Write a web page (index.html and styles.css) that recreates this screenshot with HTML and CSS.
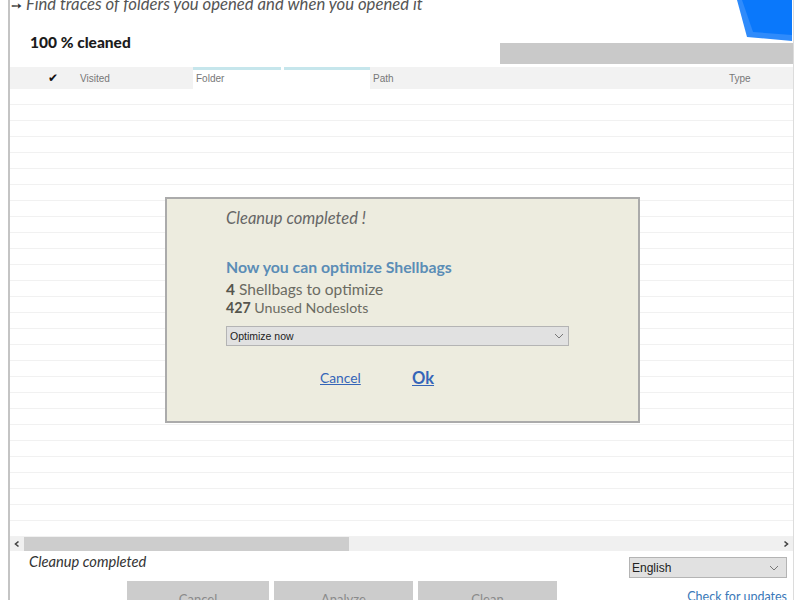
FILE: index.html
```html
<!DOCTYPE html>
<html lang="en">
<head>
<meta charset="utf-8">
<title>Shellbags cleaner</title>
<link rel="stylesheet" href="styles.css">
</head>
<body>
<div class="window">
  <svg class="logo" width="56" height="42" viewBox="0 0 56 42"><polygon points="0,0 10,37 55,41 55,0" fill="#2f8bfb"/><polygon points="5,0 16,32 55,35 55,0" fill="#0a78fb"/></svg>
  <p class="tagline"><span class="arrow">➙</span> Find traces of folders you opened and when you opened it</p>
  <div class="top">
    <h1 class="progress">100 % cleaned</h1>
    <div class="bar"></div>
  </div>
  <div class="head">
    <div class="h-check">✔</div>
    <div class="h-visited">Visited</div>
    <div class="h-folder">Folder</div>
    <div class="h-path">Path</div>
    <div class="h-type">Type</div>
  </div>
  <div class="rows">
    <div class="row"></div><div class="row"></div><div class="row"></div><div class="row"></div>
    <div class="row"></div><div class="row"></div><div class="row"></div><div class="row"></div>
    <div class="row"></div><div class="row"></div><div class="row"></div><div class="row"></div>
    <div class="row"></div><div class="row"></div><div class="row"></div><div class="row"></div>
    <div class="row"></div><div class="row"></div><div class="row"></div><div class="row"></div>
    <div class="row"></div><div class="row"></div><div class="row"></div><div class="row"></div>
    <div class="row"></div><div class="row"></div><div class="row"></div><div class="row"></div>
  </div>
  <div class="hscroll">
    <svg class="arr" width="14" height="14" viewBox="0 0 14 14"><path d="M8.5 4.500 5.500 7l3 2.500" fill="none" stroke="#444" stroke-width="1.600"/></svg>
    <div class="thumb"></div>
    <svg class="arr arr-r" width="14" height="14" viewBox="0 0 14 14"><path d="M5.500 4.500 8.500 7l-3 2.500" fill="none" stroke="#444" stroke-width="1.600"/></svg>
  </div>
  <div class="status">
    <span class="status-text">Cleanup completed</span>
    <div class="select lang"><span>English</span><svg width="10" height="6" viewBox="0 0 10 6"><path d="M1 1l4 4 4-4" fill="none" stroke="#777" stroke-width="1"/></svg></div>
  </div>
  <div class="actions">
    <button class="btn b1">Cancel</button>
    <button class="btn b2">Analyze</button>
    <button class="btn b3">Clean</button>
    <a class="updates" href="#">Check for updates</a>
  </div>
</div>
<div class="dialog">
  <p class="d-title">Cleanup completed !</p>
  <h2 class="d-head">Now you can optimize Shellbags</h2>
  <p class="d-line1"><b>4</b> Shellbags to optimize</p>
  <p class="d-line2"><b>427</b> Unused Nodeslots</p>
  <div class="select opt"><span>Optimize now</span><svg width="10" height="6" viewBox="0 0 10 6"><path d="M1 1l4 4 4-4" fill="none" stroke="#777" stroke-width="1"/></svg></div>
  <div class="d-links">
    <a class="cancel" href="#">Cancel</a>
    <a class="ok" href="#">Ok</a>
  </div>
</div>
</body>
</html>
```
FILE: styles.css
```css
* { box-sizing: border-box; }
html, body { margin: 0; height: 600px; overflow: hidden; background: #fff; }
body { font-family: Lato, "Noto Sans", sans-serif; position: relative; width: 800px; }
p, h1, h2 { margin: 0; font-weight: normal; }
.window { position: relative; margin-left: 8px; width: 786px; height: 600px; border-left: 2px solid #c4c4c4; border-right: 1px solid #dcdcdc; overflow: hidden; display: flex; flex-direction: column; }
.window > * { flex: none; }
.logo { position: absolute; top: 0; right: 0; }
.tagline { height: 14px; line-height: 8px; padding-left: 1px; font-style: italic; font-size: 16.700px; color: #555; white-space: nowrap; }
.arrow { font-style: normal; color: #333; font-size: 13px; }
.top { height: 53px; display: flex; justify-content: space-between; align-items: flex-end; padding-bottom: 3px; }
.progress { margin: 0 0 12px 20px; font-size: 15.500px; font-weight: 900; color: #1c1c1c; line-height: 20px; }
.bar { width: 293px; height: 21px; background: #c9c9c9; }
.head { height: 22px; display: flex; font-family: "Liberation Sans", sans-serif; font-size: 10px; color: #777; line-height: 23px; }
.head > div { background: #f2f2f2; padding-left: 3px; }
.h-check { width: 67px; text-align: center; color: #111; font-size: 12px; padding-left: 18px !important; padding-right: 0; }
.h-visited { width: 116px; }
.head > .h-folder { width: 177px; background: linear-gradient(to right, #c6e6ec 88px, #fff 88px, #fff 91px, #c6e6ec 91px) top / 100% 3px no-repeat, #fff; }
.h-path { width: 355px; }
.h-type { flex: 1; padding-left: 4px !important; }
.rows { height: 448px; overflow: hidden; }
.row { height: 16px; border-bottom: 1px solid #f1f1f1; }
.hscroll { height: 14px; background: #f0f0f0; display: flex; }
.arr { flex: none; }
.thumb { width: 325px; background: #cdcdcd; }
.arr-r { margin-left: auto; }
.status { height: 30px; display: flex; justify-content: space-between; padding: 6px 6px 3px 19px; }
.status-text { font-style: italic; font-size: 14.700px; color: #333; line-height: 18px; margin-top: -5px; }
.select { display: flex; align-items: center; justify-content: space-between; background: #e1e1e1; border: 1px solid #b4b4b4; font-family: "Liberation Sans", sans-serif; color: #222; }
.lang { width: 158px; height: 21px; padding: 0 7px 0 2px; font-size: 12px; }
.actions { position: relative; flex: 1; display: flex; padding-left: 117px; gap: 5px; }
.btn { height: 30px; border: 0; background: #cccccc; color: #8a8a8a; font-family: Lato, sans-serif; font-size: 13px; padding: 6px 0 0; display: block; text-align: center; }
.b1 { width: 142px; }
.b2 { width: 139px; }
.b3 { width: 139px; }
.updates { position: absolute; right: 6px; top: 8px; color: #3a78b8; font-size: 12.500px; text-decoration: none; line-height: 16px; }
.dialog { position: absolute; left: 165px; top: 197px; width: 475px; height: 226px; background: #edecdf; border: 2px solid #ababab; padding-left: 59px; color: #666; }
.d-title { margin-top: 9px; font-style: italic; font-size: 16.500px; line-height: 20px; color: #666; }
.d-head { margin-top: 29px; font-size: 15.800px; font-weight: bold; color: #5b8db6; line-height: 20px; }
.d-line1 { margin-top: 2px; font-size: 15.500px; line-height: 20px; color: #6b6b62; }
.d-line2 { font-size: 14.200px; line-height: 18px; color: #6b6b62; }
.d-line1 b, .d-line2 b { color: #55554d; }
.opt { margin-top: 9px; width: 343px; height: 20px; padding: 0 4px 0 3px; font-size: 10.500px; }
.d-links { position: relative; margin-top: 22px; height: 20px; }
.d-links a { position: absolute; color: #3565b8; }
.cancel { left: 94px; top: 1px; font-size: 13.800px; line-height: 18px; }
.ok { left: 186px; top: 0; font-size: 16.500px; font-weight: bold; line-height: 20px; }
```
